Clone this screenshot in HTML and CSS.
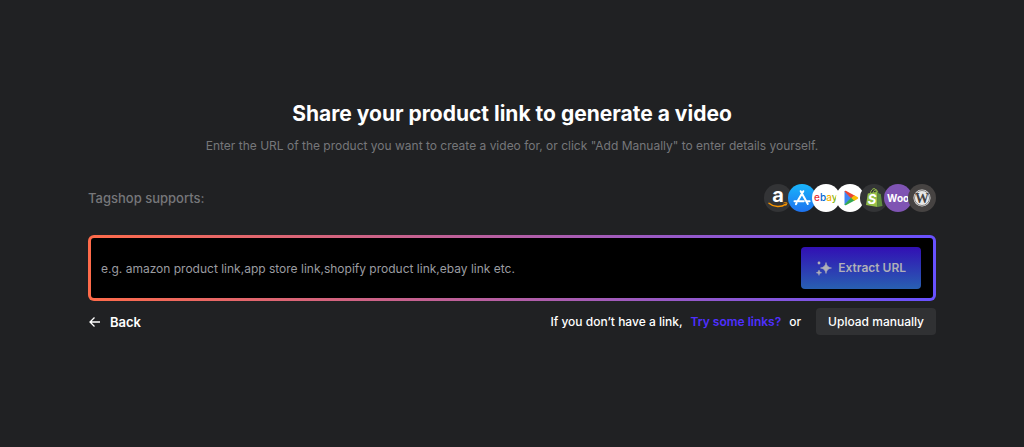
FILE: index.html
```html
<!DOCTYPE html>
<html lang="en">
<head>
    <meta charset="UTF-8">
    <meta name="viewport" content="width=device-width, initial-scale=1.0">
    <title>Tagshop</title>
    <link rel="stylesheet" href="styles.css">
</head>
<body>
    <main class="container">
        <h1>Share your product link to generate a video</h1>
        <p class="subtitle">Enter the URL of the product you want to create a video for, or click "Add Manually" to enter details yourself.</p>

        <div class="supports">
            <span class="supports-label">Tagshop supports:</span>
            <div class="logos">
                <!-- Amazon -->
                <svg class="logo" viewBox="0 0 28 28">
                    <circle cx="14" cy="14" r="14" fill="#333436"/>
                    <text x="14" y="18" font-size="20" font-weight="700" text-anchor="middle" fill="#fff">a</text>
                    <path d="M5 19.200c5 4.300 12 4.300 17 .9" fill="none" stroke="#f79400" stroke-width="1.500" stroke-linecap="round"/>
                    <path d="M19.500 19c1.500-.6 3-.6 3.300-.2s-.1 1.900-1.200 3" fill="none" stroke="#f79400" stroke-width="1"/>
                </svg>
                <!-- App Store -->
                <svg class="logo" viewBox="0 0 28 28">
                    <defs>
                        <linearGradient id="store" x1="0" y1="0" x2="0" y2="1">
                            <stop offset="0" stop-color="#19b5fb"/>
                            <stop offset="1" stop-color="#1e72ef"/>
                        </linearGradient>
                    </defs>
                    <circle cx="14" cy="14" r="14" fill="url(#store)"/>
                    <path d="M15.300 7.200L9.500 17.300M12.700 7.200L19.800 20M6.500 17.300h9.200M18.600 17.300h3M8.600 19l-.7 1.200" fill="none" stroke="#fff" stroke-width="2" stroke-linecap="round"/>
                </svg>
                <!-- eBay -->
                <svg class="logo" viewBox="0 0 28 28">
                    <circle cx="14" cy="14" r="14" fill="#fff"/>
                    <text x="2" y="17" font-size="10" font-weight="500"><tspan fill="#e53238">e</tspan><tspan fill="#0064d2">b</tspan><tspan fill="#f5af02">a</tspan><tspan fill="#86b817">y</tspan></text>
                </svg>
                <!-- Google Play -->
                <svg class="logo" viewBox="0 0 28 28">
                    <circle cx="14" cy="14" r="14" fill="#fff"/>
                    <path d="M8.500 7v14l7-7z" fill="#4285f4"/>
                    <path d="M8.500 7.500c.3-.8 1-.9 1.800-.5l8.700 4.700-3.600 3z" fill="#ea4335"/>
                    <path d="M8.500 20.500c.3.800 1 .9 1.800.5l8.700-4.700-3.600-3z" fill="#34a853"/>
                    <path d="M18.300 11.300l3.200 1.700c.9.500.9 1.500 0 2l-3.200 1.700-3-2.700z" fill="#fbbc04"/>
                </svg>
                <!-- Shopify -->
                <svg class="logo" viewBox="0 0 28 28">
                    <circle cx="14" cy="14" r="14" fill="#333436"/>
                    <path d="M7.800 9.500l9.700-1.700V23L6 21z" fill="#95bf47"/>
                    <path d="M17.500 7.800l2 1.900 1.300.2L22.500 22l-5 1z" fill="#5e8e3e"/>
                    <path d="M10.300 9.500c.5-3 2.200-4.900 3.800-4.900s2.300 1.800 2.200 4M13 9c.5-2.300 1.800-3.400 3-3.200 1 .2 1.500 1 1.700 2.200" fill="none" stroke="#95bf47" stroke-width="1"/>
                    <text x="12" y="20" font-size="13" font-weight="700" font-style="italic" text-anchor="middle" fill="#fff">S</text>
                </svg>
                <!-- WooCommerce -->
                <svg class="logo" viewBox="0 0 28 28">
                    <circle cx="14" cy="14" r="14" fill="#7f54b3"/>
                    <text x="3" y="18" font-size="10" font-weight="700" fill="#fff">Woo</text>
                </svg>
                <!-- WordPress -->
                <svg class="logo" viewBox="0 0 28 28">
                    <circle cx="14" cy="14" r="14" fill="#464342"/>
                    <circle cx="14" cy="14" r="8.500" fill="#e8e8e8"/>
                    <circle cx="14" cy="14" r="7.500" fill="none" stroke="#464342" stroke-width=".6"/>
                    <text class="serif" x="14" y="19" font-size="14" font-weight="700" text-anchor="middle" fill="#464342">W</text>
                </svg>
            </div>
        </div>

        <form class="link-box">
            <input type="url" class="link-input" aria-label="Product link" placeholder="e.g. amazon product link,app store link,shopify product link,ebay link etc.">
            <button type="button" class="extract-button">
                <svg class="sparkle" viewBox="0 0 16 16" fill="currentColor">
                    <path d="M10 2.500c.7 3.500 2 4.800 5.500 5.500-3.500.7-4.800 2-5.500 5.500-.7-3.500-2-4.800-5.500-5.500 3.500-.7 4.800-2 5.500-5.500z" stroke="currentColor" stroke-width=".6"/>
                    <path d="M3 10c.4 1.700 1 2.300 2.700 2.700C4 13.100 3.400 13.700 3 15.400 2.600 13.700 2 13.100.3 12.700 2 12.300 2.600 11.700 3 10z" stroke="currentColor" stroke-width=".5"/>
                    <circle cx="3" cy="3" r="1.400"/>
                </svg>
                Extract URL
            </button>
        </form>

        <div class="actions">
            <button type="button" class="back-button">
                <svg class="arrow" viewBox="0 0 14 14" fill="none" stroke="currentColor">
                    <path d="M12 7H2M6.500 2.500L2 7l4.500 4.500" stroke-width="1.300"/>
                </svg>
                Back
            </button>
            <div class="alternatives">
                <span>If you don’t have a link,</span>
                <a href="#">Try some links?</a>
                <span>or</span>
                <button type="button" class="upload-button">Upload manually</button>
            </div>
        </div>
    </main>
</body>
</html>
```
FILE: styles.css
```css
* {
    box-sizing: border-box;
}
body {
    margin: 0;
    background-color: #202123;
    color: #ffffff;
    font-family: "Inter", "Liberation Sans", sans-serif;
    font-size: 12px;
    line-height: 20px;
}
button,
input {
    font: inherit;
}
button {
    border: none;
    cursor: pointer;
}
.container {
    padding: 100px 88px 40px;
}
h1 {
    margin: 0;
    font-size: 21px;
    line-height: 28px;
    font-weight: 700;
    text-align: center;
}
.subtitle {
    margin: 8px 0 28px;
    color: #76777a;
    text-align: center;
}
.supports {
    display: flex;
    align-items: center;
    justify-content: space-between;
    margin-bottom: 23px;
}
.supports-label {
    color: #76777a;
    font-size: 13px;
    font-weight: 500;
}
.logos {
    display: flex;
}
.logo {
    width: 28px;
    height: 28px;
    margin-left: -4px;
}
.logo .serif {
    font-family: "Liberation Serif", serif;
}
/* Gradient frame around the link field */
.link-box {
    display: flex;
    align-items: center;
    padding: 9px 12px 9px 10px;
    border: 3px solid transparent;
    border-radius: 6px;
    background: linear-gradient(#000000, #000000) padding-box,
                linear-gradient(90deg, #ff6b4a, #6851ff) border-box;
}
.link-input {
    flex: 1;
    min-width: 0;
    height: 42px;
    padding: 0;
    border: none;
    outline: none;
    background: transparent;
    color: #ffffff;
}
.link-input::placeholder {
    color: #9b9ca0;
    opacity: 1;
}
.extract-button {
    display: flex;
    align-items: center;
    gap: 6px;
    height: 42px;
    padding: 0 15px;
    border-radius: 4px;
    background: linear-gradient(#320fb4, #2860b2);
    color: #b0b0b8;
    font-weight: 600;
}
.sparkle {
    width: 16px;
    height: 16px;
}
/* Back and upload row */
.actions {
    display: flex;
    align-items: center;
    justify-content: space-between;
    margin-top: 7px;
}
.back-button {
    display: flex;
    align-items: center;
    gap: 8px;
    padding: 0;
    background: none;
    color: #ffffff;
    font-size: 13px;
    font-weight: 600;
}
.arrow {
    width: 14px;
    height: 14px;
}
.alternatives {
    display: flex;
    align-items: center;
    gap: 8px;
    font-weight: 500;
}
.alternatives a {
    color: #4f2fff;
    font-weight: 600;
    text-decoration: none;
}
.upload-button {
    height: 27px;
    margin-left: 7px;
    padding: 0 12px;
    border-radius: 4px;
    background-color: #303133;
    color: #ffffff;
    font-weight: 500;
}
```
